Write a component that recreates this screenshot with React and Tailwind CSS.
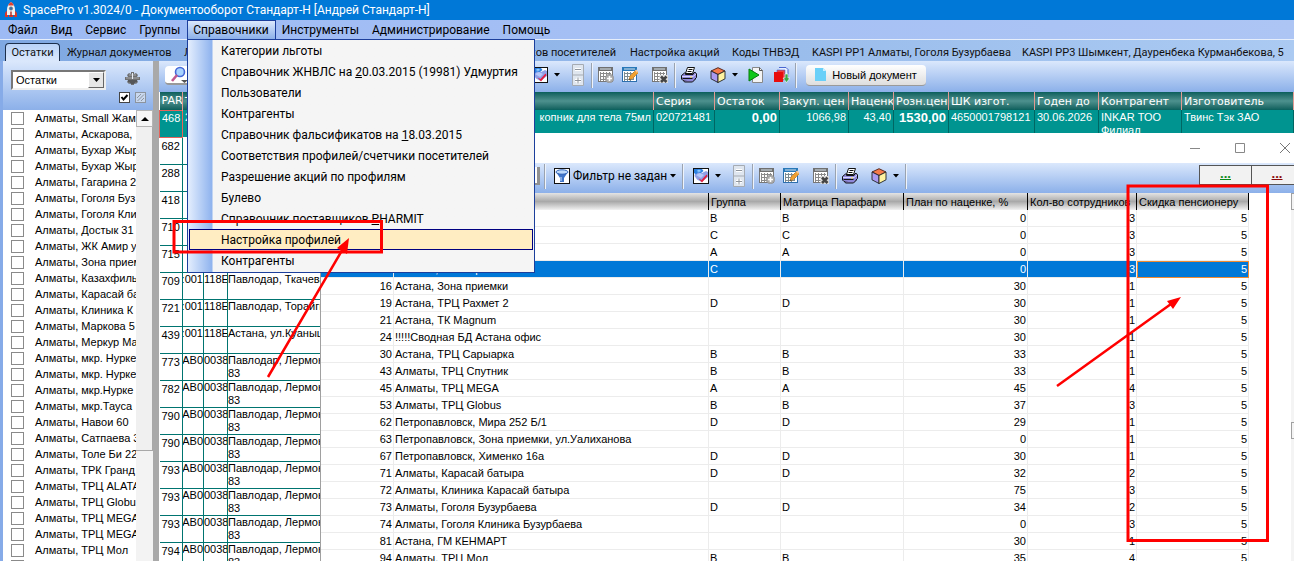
import React from 'react';

const UI = "font-['Roboto','Noto_Sans',sans-serif]";
const GRID = "font-['Liberation_Sans',Arial,sans-serif]";

const menus = ['Файл', 'Вид', 'Сервис', 'Группы', 'Справочники', 'Инструменты', 'Администрирование', 'Помощь'];

const menuItems = [
  ['Категории льготы'],
  ['Справочник ЖНВЛС на ', '2', '0.03.2015 (19981) Удмуртия'],
  ['Пользователи'],
  ['Контрагенты'],
  ['Справочник фальсификатов на ', '1', '8.03.2015'],
  ['Соответствия профилей/счетчики посетителей'],
  ['Разрешение акций по профилям'],
  ['Булево'],
  ['Справочник поставщиков ', 'P', 'HARMIT'],
  ['Настройка профилей'],
  ['Контрагенты'],
];

const branches = [
  'Small Жам', 'Аскарова,', 'Бухар Жыр', 'Бухар Жыр', 'Гагарина 2', 'Гоголя Буз', 'Гоголя Кли', 'Достык 31',
  'ЖК Амир у', 'Зона прием', 'Казахфиль', 'Карасай ба', 'Клиника К', 'Маркова 5', 'Меркур Ма', 'мкр. Нурке',
  'мкр. Нурке', 'мкр.Нурке', 'мкр.Тауса', 'Навои 60', 'Сатпаева 3', 'Толе Би 22', 'ТРК Гранд', 'ТРЦ ALATA',
  'ТРЦ Globu', 'ТРЦ MEGA', 'ТРЦ MEGA', 'ТРЦ Мол', 'ТРЦ Мол',
];

const stock = [
  ['682', '22', '', ''],
  ['288', '5I', '', ''],
  ['418', '5I', '', ''],
  ['710', '(1', '', ''],
  ['715', '(1', '', ''],
  ['709', ':001', '118E', 'Павлодар, Ткачева'],
  ['721', ':001', '118E', 'Павлодар, Торайгы'],
  ['439', ':001', '118E', 'Астана, ул.Куаныш'],
  ['773', 'AB0', '0038', 'Павлодар, Лермонт\n83'],
  ['782', 'AB0', '0038', 'Павлодар, Лермонт\n83'],
  ['790', 'AB0', '0038', 'Павлодар, Лермонт\n83'],
  ['790', 'AB0', '0038', 'Павлодар, Лермонт\n83'],
  ['793', 'AB0', '0038', 'Павлодар, Лермонт\n83'],
  ['793', 'AB0', '0038', 'Павлодар, Лермонт\n83'],
  ['793', 'AB0', '0038', 'Павлодар, Лермонт\n83'],
  ['794', 'AB0', '0038', 'Павлодар, Лермонт\n83'],
];

const profiles = [
  ['5', '', 'B', 'B', 0, 3],
  ['6', '', 'C', 'C', 0, 3],
  ['7', '', 'A', 'A', 0, 3],
  ['9', 'Алматы, Зона приемки', 'C', '', 0, 3],
  ['16', 'Астана, Зона приемки', '', '', 30, 1],
  ['19', 'Астана, ТРЦ Рахмет 2', 'D', 'D', 30, 1],
  ['21', 'Астана, ТК Magnum', '', '', 30, 1],
  ['24', '!!!!!Сводная БД Астана офис', '', '', 30, 1],
  ['30', 'Астана, ТРЦ Сарыарка', 'B', 'B', 33, 1],
  ['43', 'Алматы, ТРЦ Спутник', 'B', 'B', 33, 1],
  ['45', 'Алматы, ТРЦ MEGA', 'A', 'A', 45, 4],
  ['53', 'Алматы, ТРЦ Globus', 'B', 'B', 37, 3],
  ['62', 'Петропавловск, Мира 252 Б/1', 'D', 'D', 29, 1],
  ['63', 'Петропавловск, Зона приемки, ул.Уалиханова', '', '', 0, 1],
  ['67', 'Петропавловск, Хименко 16а', 'D', 'D', 30, 1],
  ['71', 'Алматы, Карасай батыра', 'D', 'D', 32, 2],
  ['72', 'Алматы, Клиника Карасай батыра', '', '', 75, 3],
  ['73', 'Алматы, Гоголя Бузурбаева', 'D', 'D', 34, 2],
  ['74', 'Алматы, Гоголя Клиника Бузурбаева', '', '', 0, 3],
  ['81', 'Астана, ГМ КЕНМАРТ', '', '', 30, 1],
  ['94', 'Алматы, ТРЦ Мол', 'B', 'B', 35, 4],
];

function IconButton({ label, className = '', children }) {
  return (
    <button type="button" aria-label={label} className={`block shrink-0 ${className}`}>
      {children}
    </button>
  );
}

function Sep({ className = '' }) {
  return <span className={`h-[25px] w-[2px] shrink-0 border-l border-[#9aa3b0] bg-[#eef3fb] ${className}`} />;
}

function Caret({ className = '' }) {
  return (
    <IconButton label="Ещё" className={className}>
      <svg width="6" height="4" viewBox="0 0 6 4"><path d="M0 0h6L3 3.500z" fill="#000" /></svg>
    </IconButton>
  );
}

function PaletteIcon() {
  return (
    <svg width="16" height="16" viewBox="0 0 16 16">
      <rect x=".5" y=".5" width="15" height="15" fill="#fff" stroke="#111" />
      <path d="M2 6l4-2 3 1 4-2 2 1v5l-6.500 5L4 11.500 1.500 8z" fill="#8f9fe6" />
      <path d="M3 7l4-2 4 2-3 3z" fill="#b4c8fa" />
      <path d="M1 1h8l1.500 2L8 5 5 4.500 3 6.500 1 5z" fill="#2b7fe0" />
      <path d="M3.500 3L6 1.500 8.500 3 6 4z" fill="#8ccaff" />
      <path d="M5.500 10.500L8.500 12 13.500 6.500 14.500 8 9 14.500z" fill="#e42040" />
    </svg>
  );
}

function PlusMinusIcon() {
  return (
    <svg width="12" height="22" viewBox="0 0 12 22">
      <path d="M.5 .5h11v21H.5zM.5 11h11" fill="#dfe6ef" stroke="#a5abb3" />
      <path d="M3 5.500h6M3 16.500h6M6 13.500v6" stroke="#fff" strokeWidth="3" />
      <path d="M3 5.500h6M3 16.500h6M6 13.500v6" stroke="#8f959d" />
    </svg>
  );
}

function TableIcon({ kind }) {
  const edit = kind === 'edit';
  return (
    <svg width="16" height="16" viewBox="0 0 16 16">
      <rect x=".5" y=".5" width="14" height="14" fill="#fff" stroke={edit ? '#2d6fae' : '#777'} />
      <rect x="0" y="0" width="15" height="4" fill={edit ? '#2878b8' : '#707070'} />
      <path d="M2 2h11" stroke="#d9e6ef" />
      <path d="M2 6.500h11M2 9.500h11M2 12.500h9M5.500 5v9M8.500 5v9M11.500 5v8M2.500 5v9" stroke={edit ? '#7d8b92' : '#8a8a8a'} />
      {kind === 'add' && (
        <g>
          <circle cx="11.500" cy="11.500" r="4.300" fill="#a9a9a9" stroke="#8a8a8a" strokeWidth=".6" />
          <path d="M11.500 9v5M9 11.500h5" stroke="#fff" strokeWidth="1.600" />
        </g>
      )}
      {edit && (
        <g>
          <path d="M7 13l1-4 6-6 2.500 2.500-6 6z" fill="#f0a030" stroke="#c87818" strokeWidth=".6" />
          <path d="M13 3.500l1.200-1L16 4.500 15 6z" fill="#f4c8a0" />
          <path d="M7 13l.5-1.700 1.400 1.200z" fill="#444" />
        </g>
      )}
      {kind === 'delete' && (
        <g>
          <rect x="7.500" y="8" width="8.500" height="8" fill="#ddd" />
          <path d="M9 9.500l5.500 5.500M14.500 9.500L9 15" stroke="#444" strokeWidth="2.600" />
        </g>
      )}
    </svg>
  );
}

function PrinterIcon() {
  return (
    <svg width="16" height="16" viewBox="0 0 16 16">
      <path d="M4.500 6.500l2-6h7l-2 6z" fill="#fff" stroke="#111" />
      <path d="M7.500 2.500h4M6.500 4.500h4" stroke="#111" />
      <path d="M.5 8.500l3-2.500h1v1.500h7.500l1-2h1.500l1 1.500v3.500l-3 3H2L.5 12z" fill="#8f88d8" stroke="#111" />
      <path d="M1 9.500h11l3-2.500" stroke="#d8d4ff" fill="none" />
      <path d="M1.500 11.500h10" stroke="#111" />
      <path d="M2.500 13.500l1 1.500h8l3-3" stroke="#111" fill="#8f88d8" />
      <rect x="9" y="9.500" width="2" height="1" fill="#ffe94a" />
    </svg>
  );
}

function CubeIcon() {
  return (
    <svg width="16" height="16" viewBox="0 0 16 16">
      <path d="M8 .7l7 3.300-7 3.500L1 4z" fill="#f57a4a" stroke="#4a1a10" strokeWidth=".9" />
      <path d="M1 4l7 3.500v8L1 11.800z" fill="#a99af0" stroke="#222" strokeWidth=".9" />
      <path d="M15 4L8 7.500v8l7-3.700z" fill="#fff3a0" stroke="#222" strokeWidth=".9" />
    </svg>
  );
}

function ToolGroup() {
  return (
    <>
      <IconButton label="Оформление"><PaletteIcon /></IconButton>
      <Caret className="ml-[6px]" />
      <IconButton label="Свернуть или развернуть" className="ml-3"><PlusMinusIcon /></IconButton>
      <Sep className="ml-[7px]" />
      <IconButton label="Добавить" className="ml-[5px]"><TableIcon kind="add" /></IconButton>
      <IconButton label="Изменить" className="ml-2"><TableIcon kind="edit" /></IconButton>
      <IconButton label="Удалить" className="ml-[14px]"><TableIcon kind="delete" /></IconButton>
      <Sep className="ml-[6px]" />
      <IconButton label="Печать" className="ml-[5px]"><PrinterIcon /></IconButton>
      <IconButton label="Отчёты" className="ml-[13px]"><CubeIcon /></IconButton>
      <Caret className="ml-[6px]" />
    </>
  );
}

function RocketIcon() {
  return (
    <svg width="14" height="16" viewBox="0 0 14 16">
      <path d="M3.500 8L1 11v4h3zM10.500 8L13 11v4h-3z" fill="#d8392b" />
      <path d="M7 0c3 2 4 5 4 8v5H3V8c0-3 1-6 4-8z" fill="#f2f2f2" />
      <path d="M7 0c1.500 1 2.300 2 2.900 3.500H4.100C4.700 2 5.500 1 7 0z" fill="#e04030" />
      <circle cx="7" cy="6.500" r="1.700" fill="#3a6fa8" stroke="#777" strokeWidth=".6" />
      <path d="M5 13h4v2H5z" fill="#d8392b" />
      <path d="M6.300 9.500h1.400V14H6.300z" fill="#b02a20" />
    </svg>
  );
}

function GearIcon() {
  return (
    <svg width="15" height="14" viewBox="0 0 15 14">
      <path d="M6 0h3v2l2-1 2 2-1 2h3v3h-3l1 2-2 2-2-1v2H6v-2l-2 1-2-2 1-2H0V5h3L2 3l2-2 2 1z" fill="#6f7072" />
      <path d="M1 6h13M4 3h7" stroke="#a9aaac" />
      <path d="M3 9h9M5 11h5" stroke="#3c3d3f" />
      <path d="M7 1h1v6H7z" fill="#e8edf5" />
    </svg>
  );
}

function Sidebar() {
  return (
    <aside className="flex w-[153px] shrink-0 flex-col border-l-[3px] border-[#86abe8]">
      <div className="flex h-[49px] shrink-0 bg-linear-to-b from-[#dbe8fc] to-[#8cb0e9] pl-2 pt-[9px]">
        <div className="relative h-5 w-[95px]">
          <select aria-label="Раздел" className={`${GRID} block h-5 w-full appearance-none border-2 border-t-[#777] border-l-[#777] border-r-[#eee] border-b-[#eee] bg-white pl-[3px] text-[11px] leading-4 text-black outline-none`}>
            <option>Остатки</option>
          </select>
          <span className="pointer-events-none absolute top-[2px] right-[2px] flex h-4 w-4 items-center justify-center border border-t-white border-l-white border-r-[#666] border-b-[#666] bg-[#e6e6e6]">
            <svg width="7" height="4" viewBox="0 0 7 4"><path d="M0 0h7L3.500 4z" /></svg>
          </span>
        </div>
        <div className="flex grow flex-col items-center gap-[6px] pt-[2px] pl-[6px]">
          <IconButton label="Настройки"><GearIcon /></IconButton>
          <div className="flex gap-[5px]">
            <label className="relative block size-[11px]">
              <input type="checkbox" defaultChecked aria-label="Отметить все" className="block size-[11px] appearance-none border border-[#444] bg-white" />
              <svg className="pointer-events-none absolute inset-0" width="11" height="11" viewBox="0 0 11 11"><path d="M2.500 5l2 2.500L8.500 3" fill="none" stroke="#000" strokeWidth="2" /></svg>
            </label>
            <label className="relative block size-[11px]">
              <input type="checkbox" disabled aria-label="Снять отметки" className="block size-[11px] appearance-none border border-[#8c949e] bg-[#c9d8ee]" />
              <svg className="pointer-events-none absolute inset-0" width="11" height="11" viewBox="0 0 11 11"><path d="M2 6l4-4M2.500 9L9 2.500M6 9l3-3" stroke="#8c949e" /></svg>
            </label>
          </div>
        </div>
      </div>
      <div className="flex min-h-0 grow bg-white">
        <ul className="w-[133px] overflow-hidden">
          {branches.map((b, i) => (
            <li key={i} className="h-4">
              <label className={`${GRID} flex h-4 items-center gap-[11px] whitespace-nowrap pl-2 text-[11px] leading-4 text-black`}>
                <input type="checkbox" className="size-[13px] shrink-0 appearance-none border border-[#8a8a8a] bg-white" />
                Алматы, {b}
              </label>
            </li>
          ))}
        </ul>
        <div className="flex w-[17px] flex-col bg-[#f3f3f3]">
          <button type="button" aria-label="Вверх" className="flex h-[17px] w-full shrink-0 items-center justify-center border border-[#b5b5b5] bg-[#f6f6f6]">
            <svg width="8" height="4" viewBox="0 0 8 4"><path d="M0 4h8L4 0z" /></svg>
          </button>
          <div className="h-[324px] shrink-0 border-r border-b border-[#a8a8a8] bg-[#f0f0f0]" />
        </div>
      </div>
    </aside>
  );
}

const stockHead = ['PAR', 'T', '', '', '', 'Серия', 'Остаток', 'Закуп. цен', 'Наценк', 'Розн.цен', 'ШК изгот.', 'Годен до', 'Контрагент', 'Изготовитель'];
const firstRow = ['468', '22', '', '', 'копник для тела 75мл', '020721481', '0,00', '1066,98', '43,40', '1530,00', '4650001798121', '30.06.2026', 'INKAR ТОО Филиал', 'Твинс Тэк ЗАО'];

function StockTable() {
  return (
    <table className={`${GRID} w-full table-fixed border-collapse text-[11px] leading-[13px]`}>
      <colgroup>
        <col className="w-[23px]" /><col className="w-[21px]" /><col className="w-[24px]" /><col className="w-[103px]" /><col className="w-[323px]" />
        <col className="w-[61px]" /><col className="w-[65px]" /><col className="w-[69px]" /><col className="w-[45px]" /><col className="w-[55px]" />
        <col className="w-[86px]" /><col className="w-[64px]" /><col className="w-[83px]" /><col />
      </colgroup>
      <thead>
        <tr className="h-[18px] bg-linear-to-b from-[#075f5c] via-[#4d918e] to-[#075f5c] font-['DejaVu_Sans',Verdana,sans-serif] text-[11px] text-white">
          {stockHead.map((h, i) => (
            <th key={i} className="overflow-hidden border-r border-[#e39a92] p-0 pl-[2px] text-left font-normal whitespace-nowrap">{h}</th>
          ))}
        </tr>
      </thead>
      <tbody>
        <tr className="h-[27px] bg-[#009490] align-top text-white">
          {firstRow.map((c, i) => {
            const right = i === 4 || (i > 5 && i < 10);
            const bold = i === 6 || i === 9;
            return (
              <td key={i} className={`overflow-hidden border-r border-[#006663] p-0 ${i < 2 ? 'pl-[2px]' : 'px-[2px]'} ${i === 0 ? 'border border-[#e5645c]' : ''} ${bold ? 'text-[13px] font-bold' : ''}`}>
                <div className={`flex h-[23px] overflow-hidden ${i === 12 ? '' : 'whitespace-nowrap'} ${right ? 'justify-end' : ''} pt-px`}>{c}</div>
              </td>
            );
          })}
        </tr>
        {stock.map((r, i) => (
          <tr key={i} className="h-[27px] border-b border-[#007470] bg-white align-top text-black">
            {r.map((c, j) => (
              <td key={j} className="overflow-hidden border-r border-[#007470] p-0">
                <div className={`flex h-[26px] overflow-hidden whitespace-pre ${j === 0 ? 'pt-[2px] pl-[2px]' : ''} ${j === 1 ? 'justify-end' : ''}`}>{c}</div>
              </td>
            ))}
            <td colSpan={10} />
          </tr>
        ))}
      </tbody>
    </table>
  );
}

function ProfilesWindow() {
  const heads = ['Группа', 'Матрица Парафарм', 'План по наценке, %', 'Кол-во сотрудников', 'Скидка пенсионеру'];
  return (
    <section className="absolute top-[133px] right-0 bottom-0 left-[320px] flex flex-col overflow-hidden bg-white">
      <div className="flex h-[30px] shrink-0 items-center justify-end gap-[35px] pr-1">
        <IconButton label="Свернуть"><svg width="10" height="10" viewBox="0 0 10 10"><path d="M0 5.500h10" stroke="#888" /></svg></IconButton>
        <IconButton label="Развернуть"><svg width="10" height="10" viewBox="0 0 10 10"><path d="M.5 .5h9v9h-9z" fill="none" stroke="#888" /></svg></IconButton>
        <IconButton label="Закрыть"><svg width="10" height="10" viewBox="0 0 10 10"><path d="M0 0l10 10M10 0L0 10" stroke="#777" /></svg></IconButton>
      </div>
      <div className="flex h-[30px] shrink-0 justify-between bg-linear-to-b from-[#dbe8fc] to-[#8cb0e9]">
        <div className="flex h-[26px] items-center pl-[215px]">
          <span className="h-[18px] w-[5px] border-r-[3px] border-b-2 border-[#909090] bg-white" />
          <Sep className="ml-1" />
          <button type="button" className={`${UI} ml-2 flex items-center gap-[3px] text-[12px] leading-4 whitespace-nowrap text-black`}>
            <svg width="16" height="16" viewBox="0 0 16 16">
              <rect x=".5" y=".5" width="15" height="15" fill="#fff" stroke="#111" />
              <path d="M2 4l4 6v4h4v-4l4-6z" fill="#3f74c8" />
              <ellipse cx="8" cy="4" rx="6" ry="2.200" fill="#bcd8fa" stroke="#2f62b8" />
              <path d="M7 9v4" stroke="#cfe2ff" />
            </svg>
            <span className="w-[94px] text-left">Фильтр не задан</span>
          </button>
          <Caret className="ml-[3px]" />
          <Sep className="mr-[9px] ml-[6px]" />
          <ToolGroup />
          <Sep className="ml-[6px]" />
        </div>
        <div className="flex pt-[2px]">
          <button type="button" className="h-[20px] w-[53px] border border-[#555] bg-[#f2f2f2] pb-1 text-[13px] leading-[14px] font-bold text-[#0a8a1a] underline">...</button>
          <button type="button" className="-ml-px h-[20px] w-[43px] border border-r-0 border-[#555] bg-[#f2f2f2] pb-1 pl-2 text-[13px] leading-[14px] font-bold text-[#8a0a0a] underline">...</button>
        </div>
      </div>
      <div className="flex min-h-0 grow justify-between border-l border-[#a0a0a0]">
        <table className={`${GRID} h-fit w-[928px] table-fixed border-separate border-spacing-0 text-[11px] leading-4 text-black`}>
          <colgroup>
            <col className="w-[73px]" /><col /><col className="w-[72px]" /><col className="w-[123px]" />
            <col className="w-[124px]" /><col className="w-[109px]" /><col className="w-[112px]" />
          </colgroup>
          <thead>
            <tr className="h-[17px] bg-linear-to-b from-[#e4e4e4] via-[#a9a9a9] to-[#f2f2f2]">
              <th className="p-0" />
              <th className="border-r border-black p-0" />
              {heads.map((h) => (
                <th key={h} className="overflow-hidden border-r border-black p-0 pl-[2px] text-left font-normal whitespace-nowrap">{h}</th>
              ))}
            </tr>
          </thead>
          <tbody>
            {profiles.map((r, i) => {
              const sel = i === 3;
              const cell = `overflow-hidden border-r border-b border-[#ececec] p-0 whitespace-nowrap`;
              return (
                <tr key={i} className={`h-[17px] ${sel ? 'bg-[#0078d7] text-white' : 'bg-white'}`}>
                  <td className={`${cell} pr-px text-right`}>{r[0]}</td>
                  <td className={`${cell} pl-px`}>{r[1]}</td>
                  <td className={`${cell} pl-px`}>{r[2]}</td>
                  <td className={`${cell} pl-px`}>{r[3]}</td>
                  <td className={`${cell} pr-px text-right`}>{r[4]}</td>
                  <td className={`${cell} pr-px text-right`}>{r[5]}</td>
                  <td className={`${cell} pr-px text-right ${sel ? 'outline -outline-offset-1 outline-[#f08a30]' : ''}`}>5</td>
                </tr>
              );
            })}
          </tbody>
        </table>
        <div className="w-[3px] bg-[#f4f4f4]">
          <div className="h-[17px] border border-r-0 border-[#a0a0a0]" />
          <div className="mt-[212px] h-[17px] border border-r-0 border-[#a0a0a0]" />
        </div>
      </div>
    </section>
  );
}

function DirectoryMenu() {
  return (
    <ul role="menu" className={`${UI} absolute top-[39px] left-[187px] w-[348px] border border-[#1c3f9c] bg-linear-to-r from-[#e4eefd] via-[#8fb3ee] via-[24px] to-[#f5f5f5] to-[25px] pb-px text-[12px] leading-4 text-black`}>
      {menuItems.map((m, i) => (
        <li key={i} role="none" className="px-px">
          <button
            type="button"
            role="menuitem"
            className={`flex h-[21px] w-full items-center border pl-[31px] text-left whitespace-pre ${i === 9 ? 'border-[#000080] bg-[#ffedc2]' : 'border-transparent'}`}
          >
            <span>{m[0]}{m[1] && <u>{m[1]}</u>}{m[2]}</span>
          </button>
        </li>
      ))}
    </ul>
  );
}

function Marks() {
  return (
    <svg className="pointer-events-none absolute top-0 left-0" width="1294" height="561" viewBox="0 0 1294 561" fill="none" stroke="#f00">
      <rect x="174" y="221.500" width="207.500" height="30.500" strokeWidth="3" />
      <rect x="1128" y="186" width="139.500" height="354.500" strokeWidth="3" />
      <path d="M268 377L344 247M1057 386L1171 304" strokeWidth="2.500" />
      <path d="M349 238L347 254L337 248zM1181 297L1173 309L1167 301z" fill="#f00" stroke="none" />
    </svg>
  );
}

export default function App() {
  return (
    <div className="relative flex h-screen flex-col overflow-hidden bg-white">
      <header className={`${UI} flex h-5 shrink-0 items-center gap-[5px] bg-[#0078d7] pl-1 text-[12px] leading-4 whitespace-nowrap text-white`}>
        <RocketIcon />
        <span>SpacePro v1.3024/0 - Документооборот Стандарт-Н [Андрей Стандарт-Н]</span>
      </header>
      <nav className={`${UI} flex h-5 shrink-0 border-b border-[#e6eefb] bg-linear-to-r from-[#9dbaf4] to-[#adc5f4] pl-[2px] text-[12px] leading-4 text-black`}>
        {menus.map((m) => (
          <button
            key={m}
            type="button"
            className={`h-[19px] border border-b-0 pr-[6px] pl-[5px] whitespace-nowrap ${m === 'Справочники' ? 'border-[#1c3f9c] bg-linear-to-b from-[#dbe8fc] to-[#8cb0e9]' : 'border-transparent'}`}
          >
            {m}
          </button>
        ))}
      </nav>
      <div role="tablist" className={`${UI} flex h-[21px] shrink-0 items-end bg-linear-to-r from-[#7fa8e2] to-[#abcaf2] pl-[5px] text-[11px] leading-4 whitespace-nowrap text-[#111]`}>
        <button type="button" role="tab" aria-selected="true" className="h-[18px] w-[55px] rounded-t border border-b-0 border-[#1c2f4c] bg-linear-to-b from-[#b9d3f8] to-[#dbe8fc]">Остатки</button>
        <button type="button" role="tab" className="ml-[7px] w-[103px] text-left">Журнал документов</button>
        <button type="button" role="tab" className="ml-[14px] w-[330px] text-left">Л</button>
        <button type="button" role="tab" className="w-[102px] text-right">ков посетителей</button>
        <button type="button" role="tab" className="ml-[14px] w-[88px] text-left">Настройка акций</button>
        <button type="button" role="tab" className="ml-[14px] w-[66px] text-left">Коды ТНВЭД</button>
        <button type="button" role="tab" className="ml-[14px] w-[196px] text-left">KASPI PP1 Алматы, Гоголя Бузурбаева</button>
        <button type="button" role="tab" className="ml-[14px] text-left">KASPI PP3 Шымкент, Дауренбека Курманбекова, 5</button>
      </div>
      <div className="flex min-h-0 grow">
        <Sidebar />
        <div className="w-[6px] shrink-0 bg-[#a9a9a9]" />
        <main className="min-w-0 grow overflow-hidden">
          <div className="h-[31px] bg-linear-to-b from-[#dbe8fc] to-[#8cb0e9]">
            <div className="flex h-7 items-center pl-[6px]">
              <IconButton label="Поиск" className="h-[19px] w-[26px] rounded-sm border-b-2 border-[#999] bg-white pl-[6px]">
                <svg width="18" height="17" viewBox="0 0 18 17">
                  <circle cx="9" cy="6" r="4.500" fill="#a9d4ff" stroke="#4668d8" strokeWidth="1.600" />
                  <path d="M6 9l-5 6" stroke="#c05890" strokeWidth="2.600" />
                  <path d="M10 14h7l-3.500 3z" fill="#555" />
                </svg>
              </IconButton>
              <span className="w-[341px] shrink-0" />
              <ToolGroup />
              <IconButton label="Выполнить" className="ml-[10px]">
                <svg width="16" height="16" viewBox="0 0 16 16">
                  <path d="M4.500 .5h7l3 3v12h-10z" fill="#f4f4f4" stroke="#888" />
                  <path d="M11.500 .5v3h3" fill="none" stroke="#555" />
                  <path d="M1 2l10 6-10 6z" fill="#10c818" stroke="#067a0c" />
                </svg>
              </IconButton>
              <IconButton label="Загрузить" className="ml-[10px]">
                <svg width="16" height="16" viewBox="0 0 16 16">
                  <path d="M5 .5h7l2 2V12h-4" fill="#e8efff" stroke="#4a66d0" />
                  <path d="M3 3h8v10H3z" fill="#f04040" stroke="#4a66d0" strokeWidth=".6" />
                  <path d="M0 5h9v10H0z" fill="#e80c0c" />
                  <path d="M11 7h3v4h2l-3.500 4.500L9 11h2z" fill="#3aa848" stroke="#fff" strokeWidth=".6" />
                </svg>
              </IconButton>
              <Sep className="ml-[5px]" />
              <button type="button" className={`${GRID} ml-[9px] flex h-[21px] w-[120px] items-center justify-center gap-[6px] rounded-sm border-b border-[#9a9a9a] bg-linear-to-b from-white to-[#dedede] text-[11px] leading-4 whitespace-nowrap text-black`}>
                <svg width="11" height="13" viewBox="0 0 11 13"><path d="M0 0h8l3 3v10H0z" fill="#6ad0f8" /><path d="M8 0v3h3z" fill="#c8efff" /></svg>
                Новый документ
              </button>
            </div>
          </div>
          <StockTable />
        </main>
      </div>
      <ProfilesWindow />
      <DirectoryMenu />
      <Marks />
    </div>
  );
}
